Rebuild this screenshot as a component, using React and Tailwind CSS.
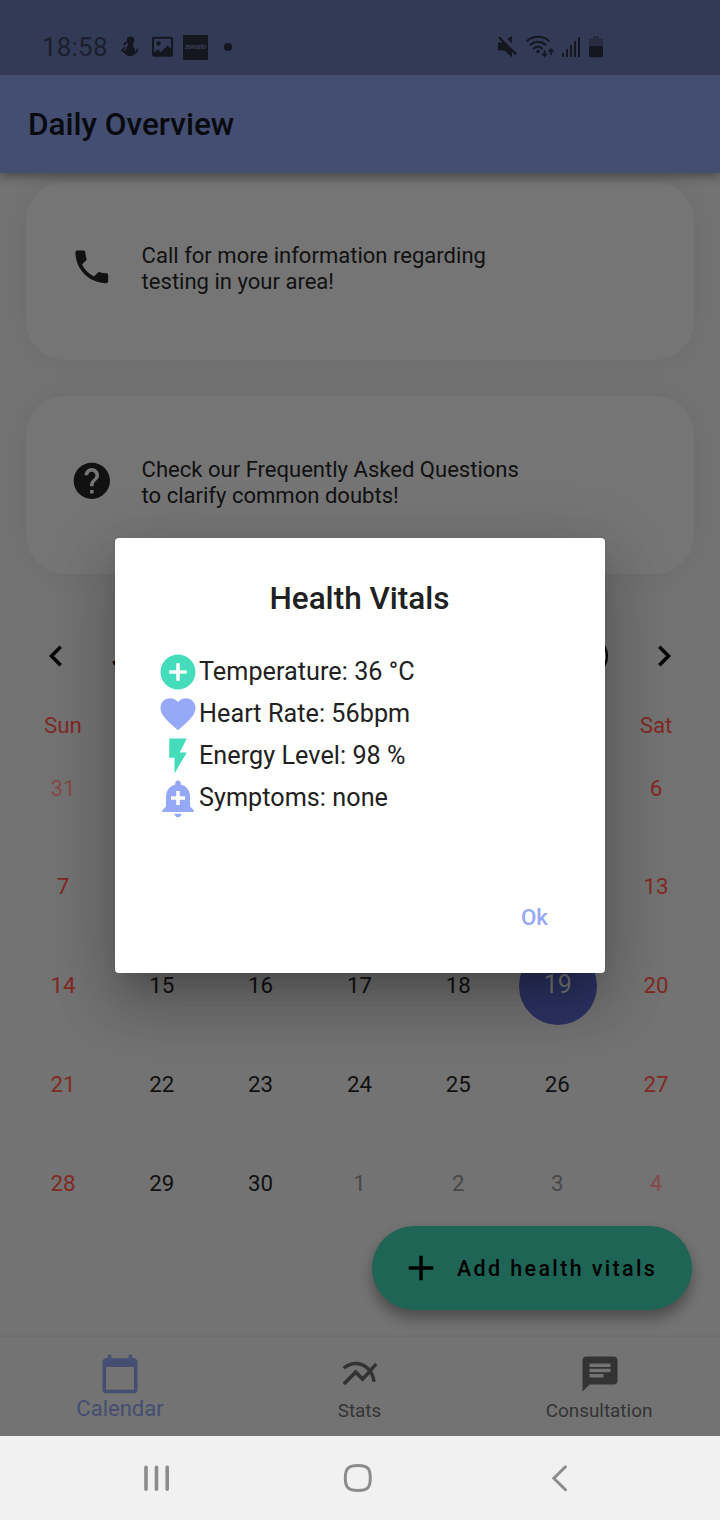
import {
  MdPhone, MdHelp, MdChevronLeft, MdChevronRight, MdAddCircle, MdFavorite, MdFlashOn,
  MdAddAlert, MdAdd, MdCalendarToday, MdMultilineChart, MdChat,
} from "react-icons/md";

function StatusBar() {
  return (
    <div className="relative z-20 flex h-[75px] shrink-0 items-start bg-[#333a55] text-[#141620]">
      <div className="mt-[34px] ml-[42px] flex h-[26px] w-[190px] items-center">
        <span className="w-[79px] shrink-0 text-[26px] leading-[26px] tracking-[0.2px] whitespace-nowrap text-[#1b1f2e]">18:58</span>
        <svg className="h-[26px] w-[18px] shrink-0" viewBox="121 34 18 26" fill="currentColor">
          <circle cx="130.600" cy="40.200" r="3.700" />
          <path d="M128 43h5c.6 2-.2 3.300 1 4.800 1.200 1.400 1.300 2.600.9 4 1.200-.6 1.700-1.700 1.900-3.600l1.400.9c0 3.800-2.800 5-4.200 5.300-1.600 1.900-6 2.200-8 .3-1.400-1.700-3-2.700-4.600-3.700-.6-.6-.3-1 .2-1.500l3-2.700 1 .7-2 2.600 1.600 1.200c0-3.300 3.200-4.300 2.800-8.300z" />
          <path d="M123.500 44.600l4.200-2.800" stroke="currentColor" strokeWidth="1.900" fill="none" />
        </svg>
        <svg className="ml-[12px] h-[26px] w-[23px] shrink-0" viewBox="151 34 23 26">
          <rect x="153" y="37.800" width="19" height="18" rx="1" fill="none" stroke="currentColor" strokeWidth="2" />
          <circle cx="158.500" cy="43.500" r="2.200" fill="currentColor" />
          <path d="M153 53.500l4.500-4 3.500 2.500 6.500-6.500 4.500 4.500v6h-19z" fill="currentColor" />
        </svg>
        <div className="ml-[9px] flex h-[25px] w-[25px] shrink-0 items-center justify-center bg-[#141620] text-[6.500px] leading-none font-bold italic text-[#3c4057]">zomato</div>
        <div className="ml-[16px] h-2 w-2 shrink-0 rounded-full bg-current" />
      </div>
      <svg className="mt-[34px] ml-[264px] h-[26px] w-[110px]" viewBox="496 34 110 26" fill="currentColor">
        <path d="M498 42.500h5.500l8.500 9v5.700l-7.500-6.700H498zM512 36v7.200l-4.800-4.200z" />
        <path d="M499 37.400l17.200 17" stroke="currentColor" strokeWidth="2.200" />
        <g fill="none" stroke="currentColor" strokeWidth="2" strokeLinecap="round">
          <path d="M527.300 40.800c6.500-5.300 15-5.300 21.500 0M530.500 44.700c4.500-3.800 10.500-3.800 15 0M534 48.300c2.500-2 5.500-2 8 0" />
          <path d="M544.500 51v5M542.500 54l2 2.200 2-2.200M551 54.500v-5M549 51.300l2-2.200 2 2.200" strokeWidth="1.600" />
        </g>
        <circle cx="538" cy="51.500" r="1.800" />
        <path d="M562 53h2v4h-2zM566 49h2v8h-2zM570 45h2v12h-2zM574 41h2v16h-2zM578 37h2v20h-2z" />
        <path d="M593 36h6v2.500h4V46h-14v-7.500h4z" fill="#262b40" />
        <path d="M589 46h14v10.500q0 .7-.7.700h-12.600q-.7 0-.7-.7z" />
      </svg>
    </div>
  );
}

function InfoCard({ icon: Icon, lines }) {
  return (
    <div className="flex h-[178px] shrink-0 items-center rounded-[38px] bg-[#757575] pb-[9px] pl-[44px] text-[#111] shadow-[0_0_24px_4px_rgba(0,0,0,0.05)]">
      <Icon className="h-[43.600px] w-[43.600px] shrink-0" />
      <div className="mt-[5px] ml-[28px] text-[22.050px] leading-[26.400px] whitespace-nowrap">
        <div>{lines[0]}</div>
        <div>{lines[1]}</div>
      </div>
    </div>
  );
}

const weekdays = ["Sun", "", "", "", "", "", "Sat"];
const days = [
  [31, null, null, null, null, null, 6],
  [7, null, null, null, null, null, 13],
  [14, 15, 16, 17, 18, 19, 20],
  [21, 22, 23, 24, 25, 26, 27],
  [28, 29, 30, 1, 2, 3, 4],
];

function dayColor(row, col) {
  const outside = (row === 0 && col === 0) || (row === 4 && col > 2);
  const weekend = col === 0 || col === 6;
  if (outside) return weekend ? "text-[#844a49]" : "text-[#484848]";
  return weekend ? "text-[#802a24]" : "text-[#111]";
}

function Day({ row, col, value }) {
  if (row === 2 && col === 5) {
    return (
      <div className="flex h-[98.800px] items-center justify-center">
        <div className="ml-[1px] flex h-[78px] w-[78px] shrink-0 items-center justify-center rounded-full bg-[#2c3363] text-[25px] text-[#7a7a7a]">
          <span className="-mt-[2px]">{value}</span>
        </div>
      </div>
    );
  }
  return <div className={`flex h-[98.800px] items-center justify-center ${dayColor(row, col)}`}>{value}</div>;
}

function Calendar() {
  return (
    <div className="flex flex-col">
      <div className="mt-[61px] flex h-[42px] items-center justify-between px-[35px] text-black">
        <MdChevronLeft className="h-[42px] w-[42px]" />
        <div className="flex flex-1 items-center justify-between pr-[35px] pl-[35px]">
          <span className="text-[30px]">J</span>
          <span className="h-[40px] w-[95px] rounded-[20px] border-2 border-black" />
        </div>
        <MdChevronRight className="h-[42px] w-[42px]" />
      </div>
      <div className="mt-[35px] grid grid-cols-7 pr-[14.500px] pl-[13.500px] text-center text-[22.300px] leading-[27px] text-[#802a24]">
        {weekdays.map((d, i) => (
          <div key={i}>{d}</div>
        ))}
      </div>
      <div className="grid grid-cols-7 pr-[14.500px] pl-[13.500px] text-[22.300px]">
        {days.map((week, r) => week.map((v, c) => <Day key={`${r}-${c}`} row={r} col={c} value={v} />))}
      </div>
    </div>
  );
}

function BottomTabs() {
  return (
    <div className="grid h-[99px] shrink-0 grid-cols-3 bg-[#737373] text-[#333] shadow-[0_-1px_3px_rgba(0,0,0,0.06)]">
      <div className="flex flex-col items-center pt-[16px] text-[#444e71]">
        <MdCalendarToday className="h-[42px] w-[42px]" />
        <span className="text-[22px] leading-[27px]">Calendar</span>
      </div>
      <div className="flex flex-col items-center pt-[16px]">
        <MdMultilineChart className="h-[42px] w-[42px]" />
        <span className="mt-[4px] mr-[1px] text-[18.900px] leading-[24px]">Stats</span>
      </div>
      <div className="flex flex-col items-center pt-[16px]">
        <MdChat className="h-[42px] w-[42px]" />
        <span className="mt-[4px] mr-[2px] text-[18.900px] leading-[24px]">Consultation</span>
      </div>
    </div>
  );
}

function SystemNav() {
  return (
    <div className="flex h-[84px] shrink-0 items-center bg-[#f1f1f1] pl-[144px] text-[#8c8c8c]">
      <svg className="h-[28px] w-[26px]" viewBox="0 0 26 28" fill="none" stroke="currentColor" strokeWidth="3.600" strokeLinecap="round">
        <path d="M2 3.300v22M12.500 3.300v22M23.200 3.300v22" />
      </svg>
      <svg className="ml-[172.500px] h-[30px] w-[30px]" viewBox="0 0 30 30" fill="none" stroke="currentColor" strokeWidth="3">
        <path d="M15 2.500c9.500 0 12.300 2.800 12.300 12.500S24.500 27.500 15 27.500 2.300 24.700 2.300 15 5.500 2.500 15 2.500z" />
      </svg>
      <svg className="ml-[178px] h-[28px] w-[17px]" viewBox="0 0 17 28" fill="none" stroke="currentColor" strokeWidth="3" strokeLinecap="round" strokeLinejoin="miter">
        <path d="M14.500 2.800L2.800 14.300l11.700 11.500" />
      </svg>
    </div>
  );
}

const vitals = [
  { icon: MdAddCircle, color: "text-[#45dcbc]", text: "Temperature: 36 °C" },
  { icon: MdFavorite, color: "text-[#95a9f8]", text: "Heart Rate: 56bpm" },
  { icon: MdFlashOn, color: "text-[#45dcbc]", text: "Energy Level: 98 %" },
  { icon: MdAddAlert, color: "text-[#95a9f8]", text: "Symptoms: none" },
];

function VitalsDialog() {
  return (
    <div className="absolute top-[538px] left-[115px] flex h-[435px] w-[490px] flex-col rounded-[4px] bg-white text-[#212121] shadow-[0_19px_26px_-12px_rgba(0,0,0,0.2),0_36px_60px_5px_rgba(0,0,0,0.14),0_16px_70px_8px_rgba(0,0,0,0.12)]">
      <h2 className="mt-[42px] pr-[1px] text-center text-[31.500px] leading-[37px] font-medium">Health Vitals</h2>
      <div className="mt-[34px] ml-[42px] flex flex-col">
        {vitals.map(({ icon: Icon, color, text }) => (
          <div key={text} className="flex h-[42px] items-center">
            <Icon className={`h-[42px] w-[42px] ${color}`} />
            <span className="text-[25.200px] tracking-[0.040px] whitespace-nowrap">{text}</span>
          </div>
        ))}
      </div>
      <button className="mt-[84px] mr-[57px] self-end text-[22.300px] leading-[28px] font-medium text-[#95a9f8]">Ok</button>
    </div>
  );
}

export default function App() {
  return (
    <div className="relative flex h-[1520px] w-[720px] flex-col overflow-hidden bg-[#737373] font-[Roboto,sans-serif]">
      <StatusBar />
      <header className="relative z-10 flex h-[98px] shrink-0 items-center bg-[#444e71] pt-[2px] pl-[28px] text-[31.500px] font-medium text-[#080a0f] shadow-[0_3px_10px_rgba(0,0,0,0.4)]">
        Daily Overview
      </header>
      <main className="flex h-[1164px] shrink-0 flex-col">
        <div className="flex flex-col gap-[36px] px-[26px] pt-[9px]">
          <InfoCard icon={MdPhone} lines={["Call for more information regarding", "testing in your area!"]} />
          <InfoCard icon={MdHelp} lines={["Check our Frequently Asked Questions", "to clarify common doubts!"]} />
        </div>
        <Calendar />
      </main>
      <BottomTabs />
      <SystemNav />
      <button className="absolute top-[1226px] left-[372px] flex h-[84px] w-[320px] items-center rounded-full bg-[#1f6556] pl-[28px] text-black shadow-[0_8px_14px_rgba(0,0,0,0.35)]">
        <MdAdd className="h-[42px] w-[42px] shrink-0" />
        <span className="mt-[2px] ml-[15px] text-[21.500px] font-medium tracking-[2.350px] whitespace-nowrap">Add health vitals</span>
      </button>
      <VitalsDialog />
    </div>
  );
}
